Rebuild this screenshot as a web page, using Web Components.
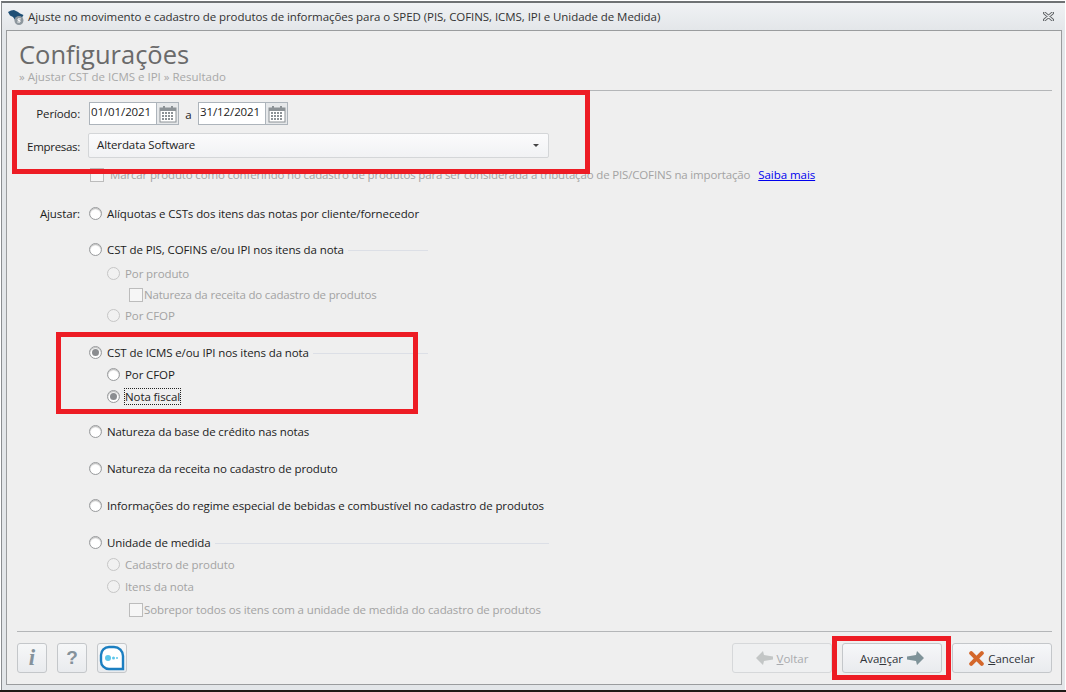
<!DOCTYPE html>
<html lang="pt-BR">
<head>
<meta charset="utf-8">
<title>Ajuste SPED</title>
<style>
  html, body { margin: 0; height: 100%; background: #1f1a17; }
  body { overflow: hidden; font-family: "Open Sans", "Noto Sans", sans-serif; }
</style>
</head>
<body>
<app-window>
  <title-bar slot="title">Ajuste no movimento e cadastro de produtos de informações para o SPED (PIS, COFINS, ICMS, IPI e Unidade de Medida)</title-bar>

  <wizard-head>
    <span slot="title">Configurações</span>
    <span slot="crumbs">» Ajustar CST de ICMS e IPI » Resultado</span>
  </wizard-head>

  <period-row></period-row>
  <company-row value="Alterdata Software"></company-row>
  <check-row style="margin: 6px 0 0 71px; --gap: 6px; --ls: -.163px" link="Saiba mais" disabled>Marcar produto como conferindo no cadastro de produtos para ser considerada a tributação de PIS/COFINS na importação</check-row>

  <radio-row caption="Ajustar:" style="margin-top:17px">Alíquotas e CSTs dos itens das notas por cliente/fornecedor</radio-row>

  <radio-row style="margin-top:14px" rule="428">CST de PIS, COFINS e/ou IPI nos itens da nota</radio-row>
  <radio-row level="1" disabled style="margin-top:2px">Por produto</radio-row>
  <check-row style="margin: 0 0 0 110px; --ls: -.18px" disabled>Natureza da receita do cadastro de produtos</check-row>
  <radio-row level="1" disabled style="margin-top:-1px">Por CFOP</radio-row>

  <radio-row style="margin-top:15px" checked rule="428">CST de ICMS e/ou IPI nos itens da nota</radio-row>
  <radio-row level="1">Por CFOP</radio-row>
  <radio-row level="1" checked focused>Nota fiscal</radio-row>

  <radio-row style="margin-top:13px">Natureza da base de crédito nas notas</radio-row>
  <radio-row style="margin-top:15px">Natureza da receita no cadastro de produto</radio-row>
  <radio-row style="margin-top:15px">Informações do regime especial de bebidas e combustível no cadastro de produtos</radio-row>

  <radio-row style="margin-top:15px" rule="549">Unidade de medida</radio-row>
  <radio-row level="1" disabled>Cadastro de produto</radio-row>
  <radio-row level="1" disabled>Itens da nota</radio-row>
  <check-row style="margin: 2px 0 0 110px; --ls: -.12px" disabled>Sobrepor todos os itens com a unidade de medida do cadastro de produtos</check-row>

  <wizard-footer slot="footer">
    <tool-button slot="tools" kind="info"></tool-button>
    <tool-button slot="tools" kind="help"></tool-button>
    <tool-button slot="tools" kind="chat"></tool-button>
    <nav-button slot="nav" icon="back" disabled><u>V</u>oltar</nav-button>
    <nav-button slot="nav" icon="next">Ava<u>n</u>çar</nav-button>
    <nav-button slot="nav" icon="cancel"><u>C</u>ancelar</nav-button>
  </wizard-footer>

  <mark-box slot="marks" style="left:12px;top:90px;width:578px;height:84px"></mark-box>
  <mark-box slot="marks" style="left:56px;top:332px;width:362px;height:82px"></mark-box>
  <mark-box slot="marks" style="left:832px;top:636px;width:119px;height:44px"></mark-box>
</app-window>

<script>
const FONT = '"Open Sans", "Noto Sans", sans-serif';

class AppWindow extends HTMLElement {
  constructor() {
    super();
    this.attachShadow({ mode: 'open' }).innerHTML = `
      <style>
        :host { display: flex; flex-direction: column; position: relative; width: 1066px; height: 690px;
                box-sizing: border-box; padding: 0 1px 0 1px; background: #fff; }
        .frame { flex: 1; display: flex; flex-direction: column; min-height: 0; margin-top: 1px;
                 border-top: 2px solid #6f7274; border-left: 1px solid #8a8d90;
                 background: linear-gradient(#f0f2f4, #e3e6e9 28px); padding: 0 3px 5px 4px; }
        .panel { flex: 1; display: flex; flex-direction: column; min-height: 0; position: relative;
                 background: #efefef; border: 1px solid #9a9c9e; padding: 0 9px 1px 12px; }
      </style>
      <div class="frame">
        <slot name="title"></slot>
        <div class="panel">
          <slot></slot>
          <slot name="footer"></slot>
        </div>
      </div>
      <slot name="marks"></slot>`;
  }
}

class TitleBar extends HTMLElement {
  constructor() {
    super();
    this.attachShadow({ mode: 'open' }).innerHTML = `
      <style>
        :host { display: flex; align-items: center; height: 27px; flex: none; font: 11.5px ${FONT}; color: #333; }
        svg { flex: none; display: block; }
        .logo { margin: 0 4px 0 2px; }
        .text { flex: 1; white-space: nowrap; letter-spacing: -.06px; }
        .x { margin-right: 8px; }
      </style>
      <svg class="logo" width="16" height="16" viewBox="0 0 16 16">
        <path d="M0 3 3 1.5 6 1 10 3 12 4.5 15.5 6 14 8.5 12 11 9 14 7 11 5 8 2 6.5Z" fill="#1f4f75"/>
        <circle cx="11" cy="11.5" r="4.5" fill="#8d979e"/>
        <path d="M12.8 9.9H10v1.5h2v1.6H9.3" fill="none" stroke="#fff" stroke-width="1"/>
      </svg>
      <span class="text"><slot></slot></span>
      <svg class="x" width="11" height="9" viewBox="0 0 11 9">
        <path d="M1.5 1 9.5 8M9.5 1 1.5 8" stroke="#5d6063" stroke-width="3" stroke-linecap="round"/>
        <path d="M1.5 1 9.5 8M9.5 1 1.5 8" stroke="#eceef0" stroke-width="1.2" stroke-linecap="round"/>
      </svg>`;
  }
}

class WizardHead extends HTMLElement {
  constructor() {
    super();
    this.attachShadow({ mode: 'open' }).innerHTML = `
      <style>
        :host { display: block; flex: none; height: 59px; border-bottom: 1px solid #b4b6b8; }
        .title { display: block; font: 25.5px/34px ${FONT}; color: #6a6a6a; padding-top: 6px; }
        .crumbs { display: block; font: 11.5px/15px ${FONT}; color: #a8a8a8; margin-top: -2px; }
      </style>
      <span class="title"><slot name="title"></slot></span>
      <span class="crumbs"><slot name="crumbs"></slot></span>`;
  }
}

class DateField extends HTMLElement {
  constructor() {
    super();
    const cells = [];
    for (let y = 7; y < 16; y += 3) for (let x = 3; x < 15; x += 3) cells.push(`<rect x="${x}" y="${y}" width="2" height="2"/>`);
    this.attachShadow({ mode: 'open' }).innerHTML = `
      <style>
        :host { display: inline-flex; height: 23px; box-sizing: border-box; border: 1px solid #adb4bb; background: #fff; font: 11.5px/18px ${FONT}; color: #222; letter-spacing: -.1px; }
        .v { width: 66px; padding-left: 1px; box-sizing: border-box; }
        .b { width: 21px; background: #e6e8ea; border-left: 1px solid #adb4bb; display: flex; align-items: center; justify-content: center; }
        svg { display: block; }
      </style>
      <span class="v">${this.getAttribute('value')}</span>
      <span class="b">
        <svg width="18" height="18" viewBox="0 0 18 18">
          <rect x="1" y="3" width="16" height="14" fill="#fff" stroke="#8c9296"/>
          <rect x="1" y="3" width="16" height="3" fill="#8c9296"/>
          <path d="M5 1v3M13 1v3" stroke="#8c9296" stroke-width="2"/>
          <g fill="#8c9296">${cells.join('')}</g>
        </svg>
      </span>`;
  }
}

class PeriodRow extends HTMLElement {
  constructor() {
    super();
    this.attachShadow({ mode: 'open' }).innerHTML = `
      <style>
        :host { display: flex; align-items: center; flex: none; margin-top: 11px; font: 11.5px ${FONT}; color: #222; }
        .l { width: 61px; text-align: right; margin-right: 9px; letter-spacing: -.15px; }
        .a { width: 19px; text-align: center; padding-top: 1px; }
      </style>
      <span class="l">Período:</span>
      <date-field value="01/01/2021"></date-field>
      <span class="a">a</span>
      <date-field value="31/12/2021"></date-field>`;
  }
}

class CompanyRow extends HTMLElement {
  constructor() {
    super();
    this.attachShadow({ mode: 'open' }).innerHTML = `
      <style>
        :host { display: flex; align-items: center; flex: none; margin-top: 8px; font: 11.5px ${FONT}; color: #222; }
        .l { width: 61px; text-align: right; margin-right: 8px; padding-top: 2px; letter-spacing: -.3px; }
        .c { width: 461px; height: 25px; box-sizing: border-box; display: flex; align-items: center; justify-content: space-between;
             border: 1px solid #d4d6d8; border-radius: 2px; background: linear-gradient(#fbfbfc, #f1f2f4); padding: 0 9px 2px 8px; letter-spacing: -.1px; }
        i { width: 0; height: 0; border: 3px solid transparent; border-top: 3px solid #444; border-bottom: 0; margin-top: 2px; }
      </style>
      <span class="l">Empresas:</span>
      <span class="c"><span>${this.getAttribute('value')}</span><i></i></span>`;
  }
}

class CheckRow extends HTMLElement {
  constructor() {
    super();
    const link = this.getAttribute('link');
    this.attachShadow({ mode: 'open' }).innerHTML = `
      <style>
        :host { display: flex; align-items: center; height: 21px; flex: none; white-space: nowrap; font: 11.5px ${FONT}; color: #222; }
        :host([disabled]) { color: #a3a3a3; }
        b { flex: none; width: 12px; height: 12px; margin-right: var(--gap, 1px); border: 1px solid #bcbcbc; background: #f6f6f6; box-sizing: content-box; }
        .t { letter-spacing: var(--ls, -.13px); }
        a { color: #0000ee; text-decoration: underline; margin-left: 8px; letter-spacing: -.05px; }
      </style>
      <b></b><span class="t"><slot></slot></span>${link ? `<a href="#">${link}</a>` : ''}`;
  }
}

class RadioRow extends HTMLElement {
  constructor() {
    super();
    const caption = this.getAttribute('caption');
    const rule = this.getAttribute('rule');
    const level = Number(this.getAttribute('level') || 0);
    // the caption column ends at x=80, radios start at x=89
    this.attachShadow({ mode: 'open' }).innerHTML = `
      <style>
        :host { display: flex; align-items: center; height: 22px; flex: none; white-space: nowrap; font: 11.5px ${FONT}; color: #1c1c1c; }
        :host([disabled]) { color: #a3a3a3; }
        .cap { width: 61px; text-align: right; margin-right: 9px; flex: none; letter-spacing: -.1px; }
        .pad { width: ${70 + level * 18}px; flex: none; }
        .r { flex: none; width: 13px; height: 13px; border-radius: 50%; margin-right: 5px; border: 1px solid #999b9d;
             background: radial-gradient(circle at 50% 60%, #fff 50%, #e4e4e4); box-shadow: inset 0 1px 1px #bbb;
             display: flex; align-items: center; justify-content: center; box-sizing: border-box; }
        :host([disabled]) .r { border-color: #c6c6c6; background: #f1f1f1; box-shadow: none; }
        :host([checked]) .r::after { content: ""; width: 7px; height: 7px; border-radius: 50%; background: #8b8d90; }
        :host([focused]) .t { outline: 1px dotted #222; outline-offset: 0; }
        .t { letter-spacing: -.1px; }
        .rule { height: 1px; background: #dcdfe6; flex: none; margin: 2px 0 0 4px; }
      </style>
      ${caption ? `<span class="cap">${caption}</span>` : `<span class="pad"></span>`}
      <span class="r"></span>
      <span class="t"><slot></slot></span>
      ${rule ? `<span class="rule" data-end="${rule}"></span>` : ''}`;
  }
  connectedCallback() {
    // section rule runs from the end of the text to a fixed end column
    const rule = this.shadowRoot.querySelector('.rule');
    if (!rule) return;
    const end = Number(rule.dataset.end);
    const x = this.shadowRoot.querySelector('.t').getBoundingClientRect().right + 4;
    rule.style.width = Math.max(0, end - x) + 'px';
  }
}

class WizardFooter extends HTMLElement {
  constructor() {
    super();
    this.attachShadow({ mode: 'open' }).innerHTML = `
      <style>
        :host { display: flex; justify-content: space-between; margin: auto 0 0 -2px; flex: none; height: 52px; box-sizing: border-box;
                border-top: 1px solid #b4b6b8; padding-top: 11px; }
        .g { display: flex; gap: 10px; }
      </style>
      <div class="g"><slot name="tools"></slot></div>
      <div class="g"><slot name="nav"></slot></div>`;
  }
}

class ToolButton extends HTMLElement {
  constructor() {
    super();
    const icons = {
      info: `<span style="font:italic bold 23px 'Liberation Serif',serif;color:#85929b">i</span>`,
      help: `<span style="font:bold 19px 'Liberation Sans',sans-serif;color:#85929b">?</span>`,
      chat: `<svg width="26" height="26" viewBox="0 0 26 26">
               <path d="M10 2h5a9 9 0 0 1 9 9v13h-14a8 8 0 0 1-8-8v-6a8 8 0 0 1 8-8Z" fill="#fff" stroke="#1c7fc1" stroke-width="2.4"/>
               <circle cx="9" cy="13" r="3" fill="#5cc6ea"/><circle cx="14.5" cy="13" r="1.5" fill="#5cc6ea"/><circle cx="18" cy="13" r="1" fill="#5cc6ea"/>
             </svg>`
    };
    this.attachShadow({ mode: 'open' }).innerHTML = `
      <style>
        :host { display: flex; align-items: center; justify-content: center; width: 30px; height: 30px; box-sizing: border-box;
                border: 1px solid #c4c7ca; border-radius: 3px; background: linear-gradient(#f6f7f8, #e9ebee); }
      </style>
      ${icons[this.getAttribute('kind')]}`;
  }
}

class NavButton extends HTMLElement {
  constructor() {
    super();
    const icons = {
      back: `<svg width="17" height="14" viewBox="0 0 17 14"><path d="M0 7 7 0 8 4 17 5.5V8.5L8 10 7 14Z" fill="#c3c6c6"/></svg>`,
      next: `<svg width="17" height="14" viewBox="0 0 17 14"><path d="M17 7 10 0 9 4 0 5.5V8.5L9 10 10 14Z" fill="#7f9399"/></svg>`,
      cancel: `<svg width="15" height="15" viewBox="0 0 15 15"><path d="M2.2 2.2 12.8 12.8M12.8 2.2 2.2 12.8" stroke="#d4672b" stroke-width="4" stroke-linecap="round"/></svg>`
    };
    const kind = this.getAttribute('icon');
    this.attachShadow({ mode: 'open' }).innerHTML = `
      <style>
        :host { display: flex; align-items: center; justify-content: center; gap: 4px; width: 100px; height: 30px; box-sizing: border-box;
                border: 1px solid #c4c7ca; border-radius: 3px; background: linear-gradient(#f6f7f9, #e9ebee); font: 11.5px ${FONT}; color: #30343a; }
        :host([disabled]) { color: #a9abae; background: #eff0f1; border-color: #d6d8da; }
        svg { display: block; flex: none; }
        .o { order: ${kind === 'next' ? 1 : 0}; }
      </style>
      <span class="o" style="display:flex">${icons[kind]}</span>
      <span><slot></slot></span>`;
  }
}

class MarkBox extends HTMLElement {
  constructor() {
    super();
    this.attachShadow({ mode: 'open' }).innerHTML = `
      <style>
        :host { position: absolute; display: block; box-sizing: border-box; border: 5px solid #ed1c24; pointer-events: none; }
      </style>`;
  }
}

[['app-window', AppWindow], ['title-bar', TitleBar], ['wizard-head', WizardHead], ['date-field', DateField],
 ['period-row', PeriodRow], ['company-row', CompanyRow], ['check-row', CheckRow], ['radio-row', RadioRow],
 ['wizard-footer', WizardFooter], ['tool-button', ToolButton], ['nav-button', NavButton], ['mark-box', MarkBox]
].forEach(([name, cls]) => customElements.define(name, cls));
</script>
</body>
</html>
